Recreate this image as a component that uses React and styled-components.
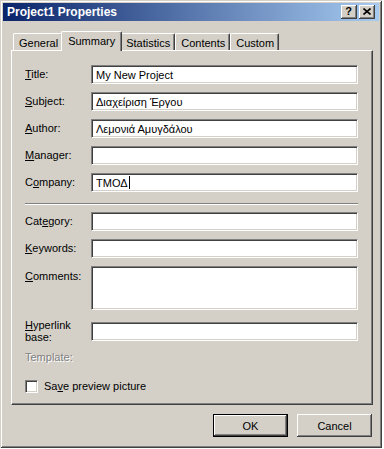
import React from 'react';
import styled, { createGlobalStyle } from 'styled-components';

const GlobalStyle = createGlobalStyle`
  html, body {
    margin: 0;
    padding: 0;
    background: #ffffff;
  }
  body {
    font-family: "Liberation Sans", Arial, sans-serif;
    font-size: 11px;
    color: #000;
  }
`;

const Window = styled.div`
  width: 382px;
  height: 448px;
  box-sizing: border-box;
  padding: 3px;
  background: #d4d0c8;
  box-shadow: inset 1px 1px #d4d0c8, inset -1px -1px #404040,
    inset 2px 2px #ffffff, inset -2px -2px #808080;
  display: flex;
  flex-direction: column;
`;

const TitleBar = styled.div`
  height: 18px;
  display: flex;
  align-items: center;
  padding: 0 4px 0 4px;
  background: linear-gradient(to right, #0a246a, #a6caf0);
  color: #fff;
  font-weight: bold;
  font-size: 12px;
`;

const TitleText = styled.div`
  flex: 1;
  white-space: nowrap;
`;

const CaptionButton = styled.div`
  width: 16px;
  height: 14px;
  box-sizing: border-box;
  margin-left: ${(p) => (p.$gap ? 2 : 0)}px;
  background: #d4d0c8;
  box-shadow: inset -1px -1px #404040, inset 1px 1px #ffffff,
    inset -2px -2px #808080;
  display: flex;
  align-items: center;
  justify-content: center;
  color: #000;
  font-weight: bold;
  font-size: 11px;
  line-height: 1;
  padding: 0 1px 1px 0;
`;

const Body = styled.div`
  flex: 1;
  display: flex;
  flex-direction: column;
  padding: 10px 6px 0 8px;
`;

const TabStrip = styled.div`
  height: 19px;
  display: flex;
  align-items: flex-end;
  padding-left: 2px;
`;

const Tab = styled.div`
  position: relative;
  z-index: ${(p) => (p.$active ? 1 : 0)};
  display: flex;
  align-items: center;
  box-sizing: border-box;
  height: ${(p) => (p.$active ? 20 : 17)}px;
  padding: ${(p) => (p.$active ? '0 6px 1px' : '1px 4px 0 5px')};
  margin: 0 ${(p) => (p.$active ? -2 : 0)}px ${(p) => (p.$active ? -1 : 0)}px;
  background: #d4d0c8;
  border-top: 1px solid #ffffff;
  border-left: 1px solid #ffffff;
  border-right: 1px solid #404040;
  border-radius: 2px 2px 0 0;
  box-shadow: inset -1px 0 #808080;
  white-space: nowrap;
`;

const Panel = styled.div`
  height: 355px;
  box-sizing: border-box;
  border-top: 1px solid #ffffff;
  border-left: 1px solid #ffffff;
  border-right: 1px solid #404040;
  border-bottom: 1px solid #404040;
  box-shadow: inset -1px -1px #808080;
  padding: 14px 14px 0 13px;
  display: flex;
  flex-direction: column;
  gap: 8px;
`;

const Row = styled.div`
  display: grid;
  grid-template-columns: 66px 1fr;
  align-items: ${(p) => (p.$top ? 'start' : 'center')};
  margin-top: ${(p) => p.$mt || 0}px;
`;

const Label = styled.div`
  line-height: ${(p) => (p.$wrap ? 12 : 13)}px;
  padding-top: ${(p) => (p.$top ? 4 : 0)}px;
  color: ${(p) => (p.$disabled ? '#808080' : '#000')};
  text-shadow: ${(p) => (p.$disabled ? '1px 1px #ffffff' : 'none')};
  margin-top: ${(p) => p.$mt || 0}px;
`;

const TextBox = styled.div`
  height: ${(p) => (p.$tall ? 44 : 19)}px;
  box-sizing: border-box;
  background: #ffffff;
  border: 1px solid;
  border-color: #808080 #ffffff #ffffff #808080;
  box-shadow: inset 1px 1px #404040, inset -1px -1px #d4d0c8;
  padding: 0 3px 0 4px;
  display: flex;
  align-items: center;
  white-space: nowrap;
  overflow: hidden;
`;

const Caret = styled.span`
  display: inline-block;
  width: 1px;
  height: 13px;
  margin-left: 1px;
  background: #000;
`;

const Separator = styled.div`
  height: 0;
  border-top: 1px solid #808080;
  border-bottom: 1px solid #ffffff;
  margin: 3px 0 -1px;
`;

const CheckRow = styled.label`
  display: flex;
  align-items: center;
  gap: 6px;
  margin-top: ${(p) => p.$mt || 0}px;
  line-height: 13px;
`;

const CheckBox = styled.span`
  width: 13px;
  height: 13px;
  box-sizing: border-box;
  background: #ffffff;
  border: 1px solid;
  border-color: #808080 #ffffff #ffffff #808080;
  box-shadow: inset 1px 1px #404040, inset -1px -1px #d4d0c8;
`;

const ButtonRow = styled.div`
  display: flex;
  justify-content: flex-end;
  gap: 9px;
  margin: 9px 1px 0 0;
`;

const Button = styled.div`
  width: 75px;
  height: 23px;
  box-sizing: border-box;
  background: #d4d0c8;
  border: ${(p) => (p.$default ? '1px solid #000' : 'none')};
  box-shadow: inset -1px -1px #404040, inset 1px 1px #ffffff,
    inset -2px -2px #808080;
  display: flex;
  align-items: center;
  justify-content: center;
`;

const fields1 = [
  { label: 'Title:', key: 0, value: 'My New Project' },
  { label: 'Subject:', key: 0, value: 'Διαχείριση Έργου' },
  { label: 'Author:', key: 0, value: 'Λεμονιά Αμυγδάλου' },
  { label: 'Manager:', key: 0, value: '' },
  { label: 'Company:', key: 1, value: 'ΤΜΟΔ', caret: true },
];

const fields2 = [
  { label: 'Category:', key: 3, value: '' },
  { label: 'Keywords:', key: 0, value: '' },
];

const Mnemonic = ({ text, index }) => (
  <>
    {text.slice(0, index)}
    <u>{text[index]}</u>
    {text.slice(index + 1)}
  </>
);

const Field = ({ label, keyIndex, value, caret }) => (
  <Row>
    <Label>
      <Mnemonic text={label} index={keyIndex} />
    </Label>
    <TextBox>
      {value}
      {caret && <Caret />}
    </TextBox>
  </Row>
);

const CloseGlyph = () => (
  <svg width="8" height="7" viewBox="0 0 8 7">
    <path d="M0.5 0.5 L7.5 6.5 M7.5 0.5 L0.5 6.5" stroke="#000" strokeWidth="1.6" fill="none" />
  </svg>
);

const tabs = ['General', 'Summary', 'Statistics', 'Contents', 'Custom'];

export default function App() {
  return (
    <>
      <GlobalStyle />
      <Window>
        <TitleBar>
          <TitleText>Project1 Properties</TitleText>
          <CaptionButton>?</CaptionButton>
          <CaptionButton $gap>
            <CloseGlyph />
          </CaptionButton>
        </TitleBar>
        <Body>
          <TabStrip>
            {tabs.map((t) => (
              <Tab key={t} $active={t === 'Summary'}>
                {t}
              </Tab>
            ))}
          </TabStrip>
          <Panel>
            {fields1.map((f) => (
              <Field key={f.label} label={f.label} keyIndex={f.key} value={f.value} caret={f.caret} />
            ))}
            <Separator />
            {fields2.map((f) => (
              <Field key={f.label} label={f.label} keyIndex={f.key} value={f.value} />
            ))}
            <Row $top>
              <Label $top>
                <Mnemonic text="Comments:" index={0} />
              </Label>
              <TextBox $tall />
            </Row>
            <Row $mt={1}>
              <Label $wrap>
                <u>H</u>yperlink
                <br />
                base:
              </Label>
              <TextBox />
            </Row>
            <Label $disabled>Template:</Label>
            <CheckRow $mt={8}>
              <CheckBox />
              <span>
                <Mnemonic text="Save preview picture" index={2} />
              </span>
            </CheckRow>
          </Panel>
          <ButtonRow>
            <Button $default>OK</Button>
            <Button>Cancel</Button>
          </ButtonRow>
        </Body>
      </Window>
    </>
  );
}
